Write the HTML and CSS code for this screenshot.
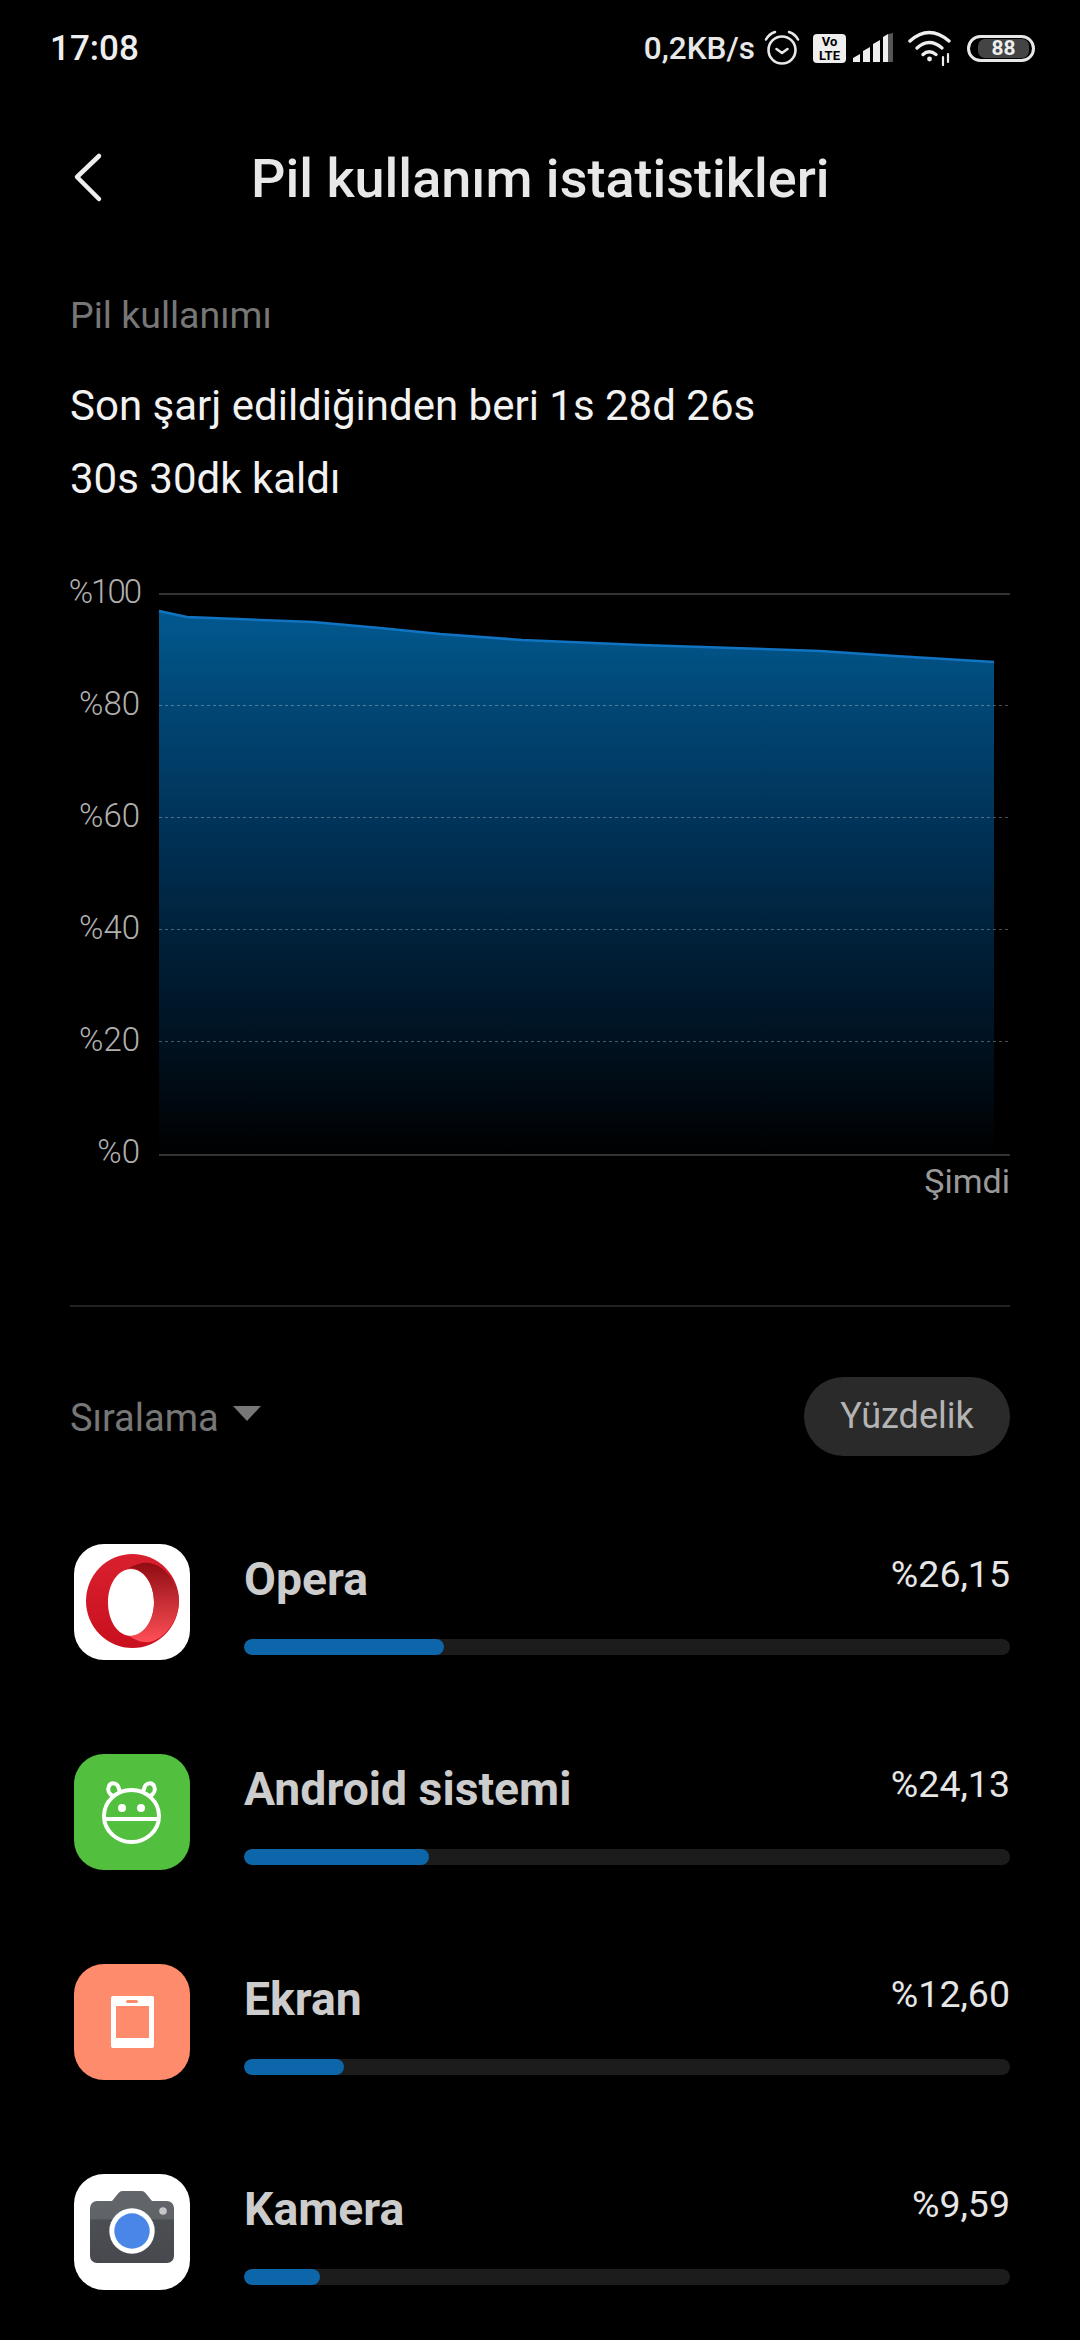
FILE: index.html
```html
<!DOCTYPE html>
<html lang="tr">
<head>
  <meta charset="UTF-8">
  <meta name="viewport" content="width=device-width, initial-scale=1.0">
  <title>Pil kullanım istatistikleri</title>
  <link rel="stylesheet" href="styles.css">
</head>
<body>
  <div class="statusbar">
    <span class="clock">17:08</span>
    <div class="status-right">
      <span class="speed">0,2KB/s</span>
      <svg class="ic-alarm" width="36" height="36" viewBox="0 0 36 36" fill="none" stroke="#e8e8e8" stroke-width="2.600">
        <circle cx="18" cy="20" r="13.500"/>
        <path d="M12.500 19l5.500 4 5.500-4" stroke-linecap="round" stroke-linejoin="round"/>
        <path d="M2 9.500Q5 4 11 2M34 9.500Q31 4 25 2" stroke-linecap="round"/>
      </svg>
      <span class="volte">Vo<br>LTE</span>
      <svg class="ic-signal" width="40" height="30" viewBox="0 0 40 30">
        <path d="M0 29v-4l7-4v8zM10 29v-11l7-4v15zM20 29v-18l7-4v22z" fill="#eee"/>
        <path d="M30 29v-25l5-3v28z" fill="#eee"/>
        <path d="M35 29V1l5-1v29z" fill="#555"/>
      </svg>
      <svg class="ic-wifi" width="46" height="36" viewBox="0 0 46 36" fill="none" stroke="#eee" stroke-width="3.400" stroke-linecap="round">
        <path d="M2 11Q21-6 41 11"/>
        <path d="M9 18Q21 7 34 18"/>
        <path d="M15 24.500Q21 19 28 24.500"/>
        <circle cx="21.500" cy="29" r="2.400" fill="#eee" stroke="none"/>
        <path d="M35 27v8M40 24v8" stroke-width="2.200"/>
      </svg>
      <span class="battery"><span class="battery-fill">88</span></span>
    </div>
  </div>

  <header class="topbar">
    <svg class="back" width="34" height="52" viewBox="0 0 34 52" fill="none" stroke="#eee" stroke-width="4.500" stroke-linecap="round" stroke-linejoin="round">
      <path d="M29 4L7 25l22 22"/>
    </svg>
    <h1>Pil kullanım istatistikleri</h1>
  </header>

  <main class="content">
    <h2 class="section-title">Pil kullanımı</h2>
    <p class="summary">Son şarj edildiğinden beri 1s 28d 26s</p>
    <p class="summary">30s 30dk kaldı</p>

    <div class="chart">
      <svg width="1010" height="630" viewBox="0 0 1010 630">
        <defs>
          <linearGradient id="fade" x1="0" y1="0" x2="0" y2="1">
            <stop offset="0" stop-color="#01598f"/>
            <stop offset="0.18" stop-color="#014674"/>
            <stop offset="0.39" stop-color="#003358"/>
            <stop offset="0.6" stop-color="#00213a"/>
            <stop offset="0.8" stop-color="#00111f"/>
            <stop offset="1" stop-color="#000"/>
          </linearGradient>
        </defs>
        <path d="M159 40L187 46 313 51 380 57 440 63 522 69 641 74 820 80 895 85 994 91V584H159z" fill="url(#fade)"/>
        <path d="M159 40L187 46 313 51 380 57 440 63 522 69 641 74 820 80 895 85 994 91" fill="none" stroke="#1174c2" stroke-width="2.500"/>
        <path d="M159 23H1010M159 584H1010" stroke="#333" stroke-width="2"/>
        <path class="grid" d="M159 134.500H1008M159 246.500H1008M159 358.500H1008M159 470.500H1008"/>
        <g class="axis">
          <text class="tight" x="140" y="32">%100</text>
          <text x="140" y="144">%80</text>
          <text x="140" y="256">%60</text>
          <text x="140" y="368">%40</text>
          <text x="140" y="480">%20</text>
          <text x="140" y="592">%0</text>
          <text class="now" x="1010" y="622">Şimdi</text>
        </g>
      </svg>
    </div>

    <div class="divider"></div>

    <div class="sort-row">
      <div class="sort-label">Sıralama <span class="caret"></span></div>
      <button class="pill">Yüzdelik</button>
    </div>

    <ul class="apps">
      <li class="app">
        <svg class="icon" viewBox="0 0 116 116">
          <defs>
            <linearGradient id="opera" x1="0" y1="0" x2="0" y2="1">
              <stop offset="0" stop-color="#d9202f"/>
              <stop offset="1" stop-color="#c9101f"/>
            </linearGradient>
            <linearGradient id="operaIn" x1="0" y1="0" x2="0" y2="1">
              <stop offset="0" stop-color="#8f0c12"/>
              <stop offset="1" stop-color="#ff4f57"/>
            </linearGradient>
          </defs>
          <rect width="116" height="116" rx="30" fill="#fff"/>
          <path fill-rule="evenodd" d="M58.500 10a46.500 47 0 1 0 0 94 46.500 47 0 1 0 0-94zM57 25c13 0 23 15 23 33.500S70 92 57 92 34 77 34 58.500 44 25 57 25z" fill="url(#opera)"/>
          <path d="M55 24C62 20 70 18 75 19 90 21 105 38 105 57 105 76 90 96 75 98 68 99 62 96 55 92 70 92 80 76 80 58 80 40 70 24 55 24z" fill="url(#operaIn)"/>
        </svg>
        <div class="app-body">
          <div class="app-head"><span class="app-name">Opera</span><span class="app-pct">%26,15</span></div>
          <div class="track"><div class="fill" style="width: 26.15%"></div></div>
        </div>
      </li>
      <li class="app">
        <svg class="icon" viewBox="0 0 116 116">
          <rect width="116" height="116" rx="30" fill="#52bf3f"/>
          <g fill="none" stroke="#fff" stroke-width="4" stroke-linecap="round" stroke-linejoin="round">
            <ellipse cx="57.500" cy="62" rx="27.500" ry="26"/>
            <path d="M39 42C35 40 33 36 35 32 37 28 42 29 44 32L46 38"/>
            <path d="M76 42C80 40 82 36 80 32 78 28 73 29 71 32L69 38"/>
            <path d="M31 65H84"/>
          </g>
          <circle cx="48" cy="54" r="4" fill="#fff"/>
          <circle cx="67" cy="54" r="4" fill="#fff"/>
        </svg>
        <div class="app-body">
          <div class="app-head"><span class="app-name">Android sistemi</span><span class="app-pct">%24,13</span></div>
          <div class="track"><div class="fill" style="width: 24.13%"></div></div>
        </div>
      </li>
      <li class="app">
        <svg class="icon" viewBox="0 0 116 116">
          <rect width="116" height="116" rx="30" fill="#fd8b6c"/>
          <path fill-rule="evenodd" d="M39 32h39a2 2 0 0 1 2 2v48a2 2 0 0 1-2 2H39a2 2 0 0 1-2-2V34a2 2 0 0 1 2-2zM42 42v32h33V42z" fill="#fff"/>
          <rect x="52" y="36" width="12" height="3" rx="1.500" fill="#fd8b6c"/>
        </svg>
        <div class="app-body">
          <div class="app-head"><span class="app-name">Ekran</span><span class="app-pct">%12,60</span></div>
          <div class="track"><div class="fill" style="width: 13.05%"></div></div>
        </div>
      </li>
      <li class="app">
        <svg class="icon" viewBox="0 0 116 116">
          <defs>
            <linearGradient id="cam" x1="0" y1="0" x2="0" y2="1">
              <stop offset="0" stop-color="#63666b"/>
              <stop offset="0.39" stop-color="#5f6368"/>
              <stop offset="0.4" stop-color="#4b4e53"/>
              <stop offset="1" stop-color="#47494e"/>
            </linearGradient>
          </defs>
          <rect width="116" height="116" rx="30" fill="#fff"/>
          <path d="M23 27h15l6.500-8a5 5 0 0 1 4-2h19a5 5 0 0 1 4 2l6.500 8h15a7 7 0 0 1 7 7v48a7 7 0 0 1-7 7H23a7 7 0 0 1-7-7V34a7 7 0 0 1 7-7z" fill="url(#cam)"/>
          <circle cx="58" cy="57" r="22.700" fill="#fff"/>
          <circle cx="58" cy="57" r="17.700" fill="#4a86e8"/>
          <circle cx="89" cy="37" r="3.800" fill="#c4c6c8"/>
        </svg>
        <div class="app-body">
          <div class="app-head"><span class="app-name">Kamera</span><span class="app-pct">%9,59</span></div>
          <div class="track"><div class="fill" style="width: 9.95%"></div></div>
        </div>
      </li>
    </ul>
  </main>
</body>
</html>
```

FILE: styles.css
```css
html, body { margin: 0; padding: 0; background: #000; }
body { width: 1080px; height: 2340px; overflow: hidden; color: #f2f2f2; font-family: Roboto, "Noto Sans", sans-serif; }
h1, h2, p, ul { margin: 0; padding: 0; }

.statusbar { display: flex; justify-content: space-between; align-items: center; height: 96px; padding: 0 45px 0 50px; box-sizing: border-box; }
.clock { font-size: 35px; font-weight: 500; color: #eee; }
.status-right { display: flex; align-items: center; }
.speed { font-size: 31.500px; font-weight: 500; color: #e8e8e8; margin-right: 9px; }
.ic-alarm { margin-right: 13px; }
.volte { width: 33px; height: 29px; background: #eee; color: #000; border-radius: 4px; font-size: 13px; line-height: 14px; font-weight: 700; text-align: center; padding-top: 1px; box-sizing: border-box; margin-right: 7px; }
.ic-signal { margin-right: 15px; }
.ic-wifi { margin-right: 13px; }
.battery { display: flex; width: 68px; height: 27px; border: 3px solid #e8e8e8; border-radius: 15px; padding: 1px 3px 1px 8px; box-sizing: border-box; }
.battery-fill { width: 100%; background: #444; border-radius: 7px; color: #eee; font-size: 21px; line-height: 19px; font-weight: 700; text-align: center; }

.topbar { display: flex; align-items: center; height: 164px; padding-left: 70px; }
.back { margin-right: 147px; }
.topbar h1 { font-size: 54px; font-weight: 500; color: #e8e8e8; }

.content { padding: 0 70px; }
.section-title { margin-top: 33px; font-size: 37.500px; font-weight: 400; color: #777; line-height: 44px; }
.summary { font-size: 42px; line-height: 73px; color: #f2f2f2; }
.section-title + .summary { margin-top: 32px; }

.chart { margin: 56px 0 0 -70px; height: 630px; }
.chart svg { display: block; }
.grid { fill: none; stroke: #fff; stroke-opacity: 0.3; stroke-width: 1; stroke-dasharray: 3 3; }
.axis text { font-family: Roboto, sans-serif; font-size: 33px; font-weight: 300; fill: #b0b0b0; text-anchor: end; }
.axis .tight { letter-spacing: -2px; }
.axis .now { font-size: 34px; font-weight: 400; fill: #999; }

.divider { height: 2px; background: #222; margin-top: 104px; }

.sort-row { display: flex; justify-content: space-between; align-items: center; margin-top: 69px; height: 80px; }
.sort-label { font-size: 38px; color: #777; display: flex; align-items: center; padding-top: 4px; }
.caret { width: 0; height: 0; margin-left: 14px; margin-bottom: 10px; border-left: 14px solid transparent; border-right: 14px solid transparent; border-top: 15px solid #777; }
.pill { width: 206px; height: 79px; border: 0; border-radius: 40px; background: #2a2a2a; color: #b4b4b4; font-family: inherit; font-size: 36px; padding: 0; }

.apps { list-style: none; margin-top: 88px; }
.app { display: flex; height: 116px; margin-bottom: 94px; margin-left: 4px; }
.icon { width: 116px; height: 116px; flex: none; margin-right: 54px; }
.app-body { flex: 1; padding-top: 11px; }
.app-head { display: flex; justify-content: space-between; align-items: flex-start; height: 84px; }
.app-name { font-size: 46.300px; font-weight: 700; color: #ccc; line-height: 48px; }
.app-pct { font-size: 37.500px; color: #e6e6e6; line-height: 38px; }
.track { height: 16px; border-radius: 8px; background: #1c1c1c; overflow: hidden; }
.fill { height: 100%; border-radius: 8px; background: #0c66a9; }
```
